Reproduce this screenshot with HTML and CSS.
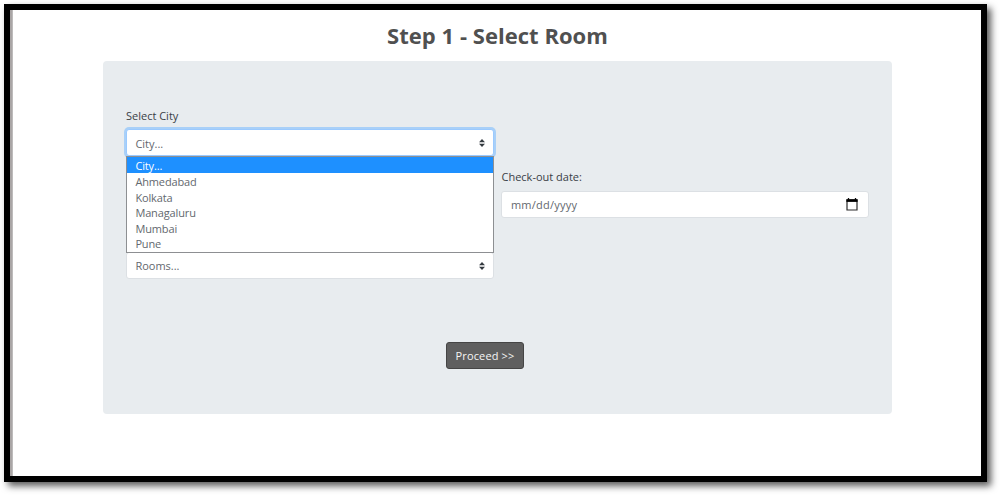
FILE: index.html
```
<!DOCTYPE html>
<html lang="en">
<head>
<meta charset="utf-8">
<title>Select Room</title>
<link rel="stylesheet" href="styles.css">
</head>
<body>
<main class="frame">
  <h1 class="title"><span class="title-text">Step 1 - Select Room</span></h1>
  <form class="panel">
    <div class="fields">
      <div class="field city">
        <div class="label city-label">Select City</div>
        <div class="control focused"><span class="value">City...</span>
          <svg class="caret" viewBox="0 0 6 8"><path fill="#343a40" d="M3 0L0 3.300h6zm0 8L0 4.700h6z"/></svg>
        </div>
        <div class="options">
          <div class="option selected">City...</div>
          <div class="option">Ahmedabad</div>
          <div class="option">Kolkata</div>
          <div class="option">Managaluru</div>
          <div class="option">Mumbai</div>
          <div class="option">Pune</div>
        </div>
      </div>
      <div class="field checkout">
        <div class="label">Check-out date:</div>
        <div class="control"><span class="value date">mm/dd/yyyy</span>
          <svg class="calendar" viewBox="0 0 12 13"><path d="M2.500 0v2M9.500 0v2" stroke="#111" stroke-width="1.3"/><path d="M1 2h10v10H1z" fill="none" stroke="#2b2b2b" stroke-width="1.2"/><path d="M.4 1.200h11.200v2.700H.4z" fill="#000"/></svg>
        </div>
      </div>
      <div class="field rooms">
        <div class="control"><span class="value">Rooms...</span>
          <svg class="caret" viewBox="0 0 6 8"><path fill="#343a40" d="M3 0L0 3.300h6zm0 8L0 4.700h6z"/></svg>
        </div>
      </div>
    </div>
    <button class="proceed" type="button">Proceed &gt;&gt;</button>
  </form>
</main>
</body>
</html>
```
FILE: styles.css
```
* { box-sizing: border-box; }
body {
  margin: 0;
  height: 495px;
  padding: 4px;
  overflow: hidden;
  background: #fff;
  font-family: "Open Sans", "Noto Sans", sans-serif;
  font-size: 11px;
  color: #495057;
}
.frame {
  width: 983px;
  height: 478px;
  border: 6px solid #000;
  background: linear-gradient(90deg, #aaa6a6 0 2px, #bdbbbb 2px 3px, #fff 3px);
  box-shadow: 4px 4px 7px rgba(0, 0, 0, .65);
}
.title {
  margin: 0;
  padding-left: 4px;
  height: 51px;
  line-height: 50px;
  text-align: center;
  font-size: 22px;
  font-weight: 700;
  letter-spacing: .03px;
  color: #505050;
}
.panel {
  width: 789px;
  height: 353px;
  margin: 0 0 0 93.400px;
  padding: 45px 22.600px 0;
  border-radius: 4px;
  background: #e8ecef;
}
.fields {
  display: grid;
  grid-template-columns: 368px 368px;
  grid-template-rows: 62px 61px 50px;
  column-gap: 7.500px;
}
.field { position: relative; }
.checkout { grid-column: 2; grid-row: 2; }
.rooms { grid-column: 1; grid-row: 3; padding-top: 23px; }
.label {
  height: 23px;
  line-height: 18px;
  color: #3a4046;
}
.city-label { line-height: 20px; }
.control {
  display: flex;
  align-items: center;
  justify-content: space-between;
  height: 27px;
  padding: 0 8.400px;
  border: 1px solid #dce0e4;
  border-radius: 3px;
  background: #fff;
  color: #63686e;
}
.focused { border-color: #9bcaff; box-shadow: 0 0 0 2px #a9d0f8; }
.focused .value { padding-top: 1px; }
.date { letter-spacing: .25px; }
.caret { width: 6px; height: 8px; }
.calendar { width: 12px; height: 13px; margin-right: 2.600px; }
.options {
  position: absolute;
  z-index: 2;
  top: 49.500px;
  left: 0;
  width: 368px;
  height: 97px;
  border: 1px solid #8d8f92;
  background: #fff;
  color: #63686e;
  letter-spacing: -.13px;
}
.option { height: 15.600px; padding-left: 8.400px; line-height: 17px; }
.selected { height: 16.500px; background: #1e90ff; color: #fff; }
.proceed {
  display: block;
  width: 78px;
  height: 27px;
  margin: 63px 0 0 320px;
  padding: 0;
  border: 1px solid #454545;
  border-radius: 3px;
  background: #5f5f5f;
  color: #f5f5f5;
  font: inherit;
  letter-spacing: .15px;
}
```
